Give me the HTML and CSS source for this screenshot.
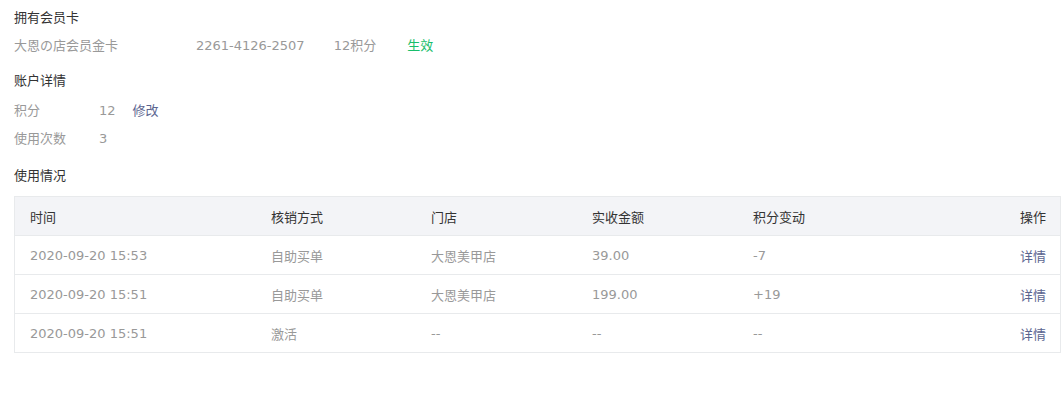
FILE: index.html
```html
<!DOCTYPE html>
<html lang="zh-CN">
<head>
    <meta charset="UTF-8">
    <meta name="viewport" content="width=device-width, initial-scale=1.0">
    <title>会员详情</title>
    <link rel="stylesheet" href="styles.css">
</head>
<body>
    <div class="page">
        <!-- 会员卡 -->
        <div class="title">拥有会员卡</div>
        <div class="card_row">
            <span class="card_name">大恩の店会员金卡</span>
            <span class="card_no">2261-4126-2507</span>
            <span class="card_point">12积分</span>
            <span class="status">生效</span>
        </div>
        <!-- 账户详情 -->
        <div class="title title_gap">账户详情</div>
        <div class="info_row">
            <span class="info_label">积分</span>
            <span class="info_value">12</span>
            <a href="javascript:;" class="link">修改</a>
        </div>
        <div class="info_row">
            <span class="info_label">使用次数</span>
            <span class="info_value">3</span>
        </div>
        <!-- 使用情况 -->
        <div class="title title_gap2">使用情况</div>
        <table class="record_table">
            <thead>
                <tr>
                    <th class="col_time">时间</th>
                    <th class="col_type">核销方式</th>
                    <th class="col_shop">门店</th>
                    <th class="col_money">实收金额</th>
                    <th class="col_change">积分变动</th>
                    <th class="col_op">操作</th>
                </tr>
            </thead>
            <tbody>
                <tr>
                    <td>2020-09-20 15:53</td>
                    <td>自助买单</td>
                    <td>大恩美甲店</td>
                    <td>39.00</td>
                    <td>-7</td>
                    <td class="col_op"><a href="javascript:;" class="link">详情</a></td>
                </tr>
                <tr>
                    <td>2020-09-20 15:51</td>
                    <td>自助买单</td>
                    <td>大恩美甲店</td>
                    <td>199.00</td>
                    <td>+19</td>
                    <td class="col_op"><a href="javascript:;" class="link">详情</a></td>
                </tr>
                <tr>
                    <td>2020-09-20 15:51</td>
                    <td>激活</td>
                    <td>--</td>
                    <td>--</td>
                    <td>--</td>
                    <td class="col_op"><a href="javascript:;" class="link">详情</a></td>
                </tr>
            </tbody>
        </table>
    </div>
</body>
</html>
```

FILE: styles.css
```css
body{
    margin: 0;
    font-family: "DejaVu Sans", "Noto Sans CJK SC", sans-serif;
    font-size: 13px;
    color: #999;
    background: #fff;
}
.page{
    padding: 8px 3px 0 14px;
}
.title{
    line-height: 20px;
    color: #333;
}
.title_gap{
    margin-top: 15px;
}
.title_gap2{
    margin-top: 17px;
}
.card_row{
    display: flex;
    line-height: 20px;
    margin-top: 8px;
}
.card_name{
    width: 182px;
}
.card_no{
    margin-right: 29px;
}
.card_point{
    margin-right: 31px;
}
.status{
    color: #19be6b;
}
.info_row{
    display: flex;
    line-height: 20px;
    margin-top: 10px;
}
.info_row + .info_row{
    margin-top: 8px;
}
.info_label{
    width: 85px;
}
.info_value{
    margin-right: 17px;
}
.link{
    color: #5b6590;
    text-decoration: none;
}
.record_table{
    width: 100%;
    margin-top: 10px;
    border-collapse: collapse;
    border: 1px solid #e8eaec;
}
.record_table th,
.record_table td{
    height: 38px;
    padding: 0 0 0 15px;
    text-align: left;
    font-weight: normal;
    border-bottom: 1px solid #e8eaec;
}
.record_table th{
    background: #f3f4f7;
    color: #333;
}
.col_time{
    width: 226px;
}
.col_type{
    width: 145px;
}
.col_shop{
    width: 146px;
}
.col_money{
    width: 146px;
}
.record_table .col_op{
    text-align: right;
    padding-right: 14px;
}
```
